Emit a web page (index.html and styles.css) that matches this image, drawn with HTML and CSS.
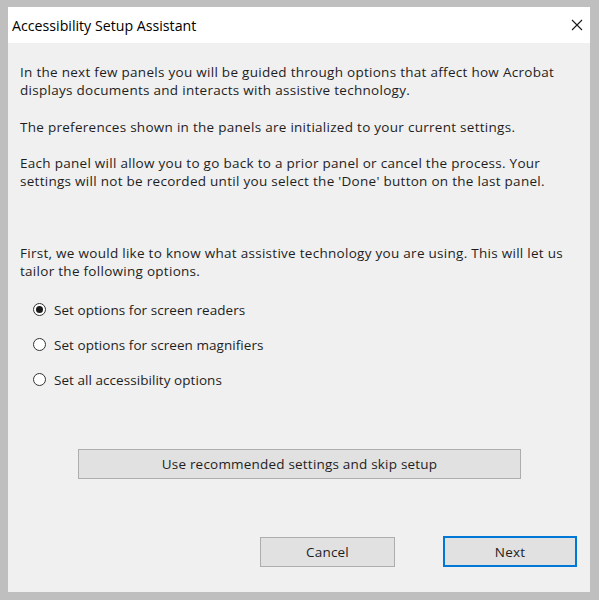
FILE: index.html
```html
<!DOCTYPE html>
<html>
<head>
<meta charset="utf-8">
<link rel="stylesheet" href="styles.css">
</head>
<body>
<div class="window">
  <div class="titlebar">
    <span class="title">Accessibility Setup Assistant</span>
    <svg class="close" width="12" height="12" viewBox="0 0 12 12"><path d="M1 1L11 11M11 1L1 11" stroke="#1a1a1a" stroke-width="1.1" fill="none"/></svg>
  </div>
  <div class="content">
    <p class="p1">In the next few panels you will be guided through options that affect how Acrobat<br>displays documents and interacts with assistive technology.</p>
    <p class="p2">The preferences shown in the panels are initialized to your current settings.</p>
    <p class="p3">Each panel will allow you to go back to a prior panel or cancel the process. Your<br>settings will not be recorded until you select the 'Done' button on the last panel.</p>
    <p class="p4">First, we would like to know what assistive technology you are using. This will let us<br>tailor the following options.</p>
    <div class="radios">
      <div class="radio"><span class="circle checked"></span><span>Set options for screen readers</span></div>
      <div class="radio"><span class="circle"></span><span>Set options for screen magnifiers</span></div>
      <div class="radio"><span class="circle"></span><span>Set all accessibility options</span></div>
    </div>
    <div class="btn wide">Use recommended settings and skip setup</div>
    <div class="footer">
      <div class="btn cancel">Cancel</div>
      <div class="btn next">Next</div>
    </div>
  </div>
</div>
</body>
</html>
```
FILE: styles.css
```css
html, body {
  margin: 0;
  padding: 0;
  background: #bfbfbf;
}
body {
  width: 599px;
  height: 600px;
  overflow: hidden;
  font-family: "Open Sans", "Noto Sans", sans-serif;
  color: #1e1e1e;
}
.window {
  margin: 7px 0 0 8px;
  width: 582px;
  height: 585px;
  background: #f0f0f0;
  display: flex;
  flex-direction: column;
}
.titlebar {
  height: 36px;
  background: #ffffff;
  display: flex;
  align-items: center;
  justify-content: space-between;
  padding: 0 7px 0 4px;
}
.title {
  font-size: 14.2px;
  color: #000;
}
.close {
  display: block;
}
.content {
  padding: 20px 13px 0 12px;
  font-size: 13.5px;
  letter-spacing: 0.28px;
  line-height: 18px;
  white-space: nowrap;
}
p {
  margin: 0;
}
.p2 { margin-top: 19px; }
.p3 { margin-top: 18px; }
.p4 { margin-top: 54px; }
.radios {
  margin-top: 12px;
  padding-left: 13px;
  letter-spacing: 0.05px;
}
.radio {
  height: 35px;
  display: flex;
  align-items: center;
  gap: 8px;
}
.circle {
  box-sizing: border-box;
  width: 13px;
  height: 13px;
  border: 1px solid #333;
  border-radius: 50%;
  background: #fff;
  display: flex;
  align-items: center;
  justify-content: center;
}
.circle.checked::after {
  content: "";
  width: 7px;
  height: 7px;
  border-radius: 50%;
  background: #1a1a1a;
}
.btn {
  box-sizing: border-box;
  height: 30px;
  background: #e1e1e1;
  border: 1px solid #adadad;
  display: flex;
  align-items: center;
  justify-content: center;
  letter-spacing: 0.2px;
}
.wide {
  margin-top: 52px;
  margin-left: 58px;
  width: 443px;
}
.footer {
  margin-top: 58px;
  display: flex;
  justify-content: flex-end;
  gap: 48px;
}
.cancel {
  width: 135px;
}
.next {
  width: 134px;
  height: 31px;
  margin-top: -1px;
  border: 2px solid #0078d7;
}
```
